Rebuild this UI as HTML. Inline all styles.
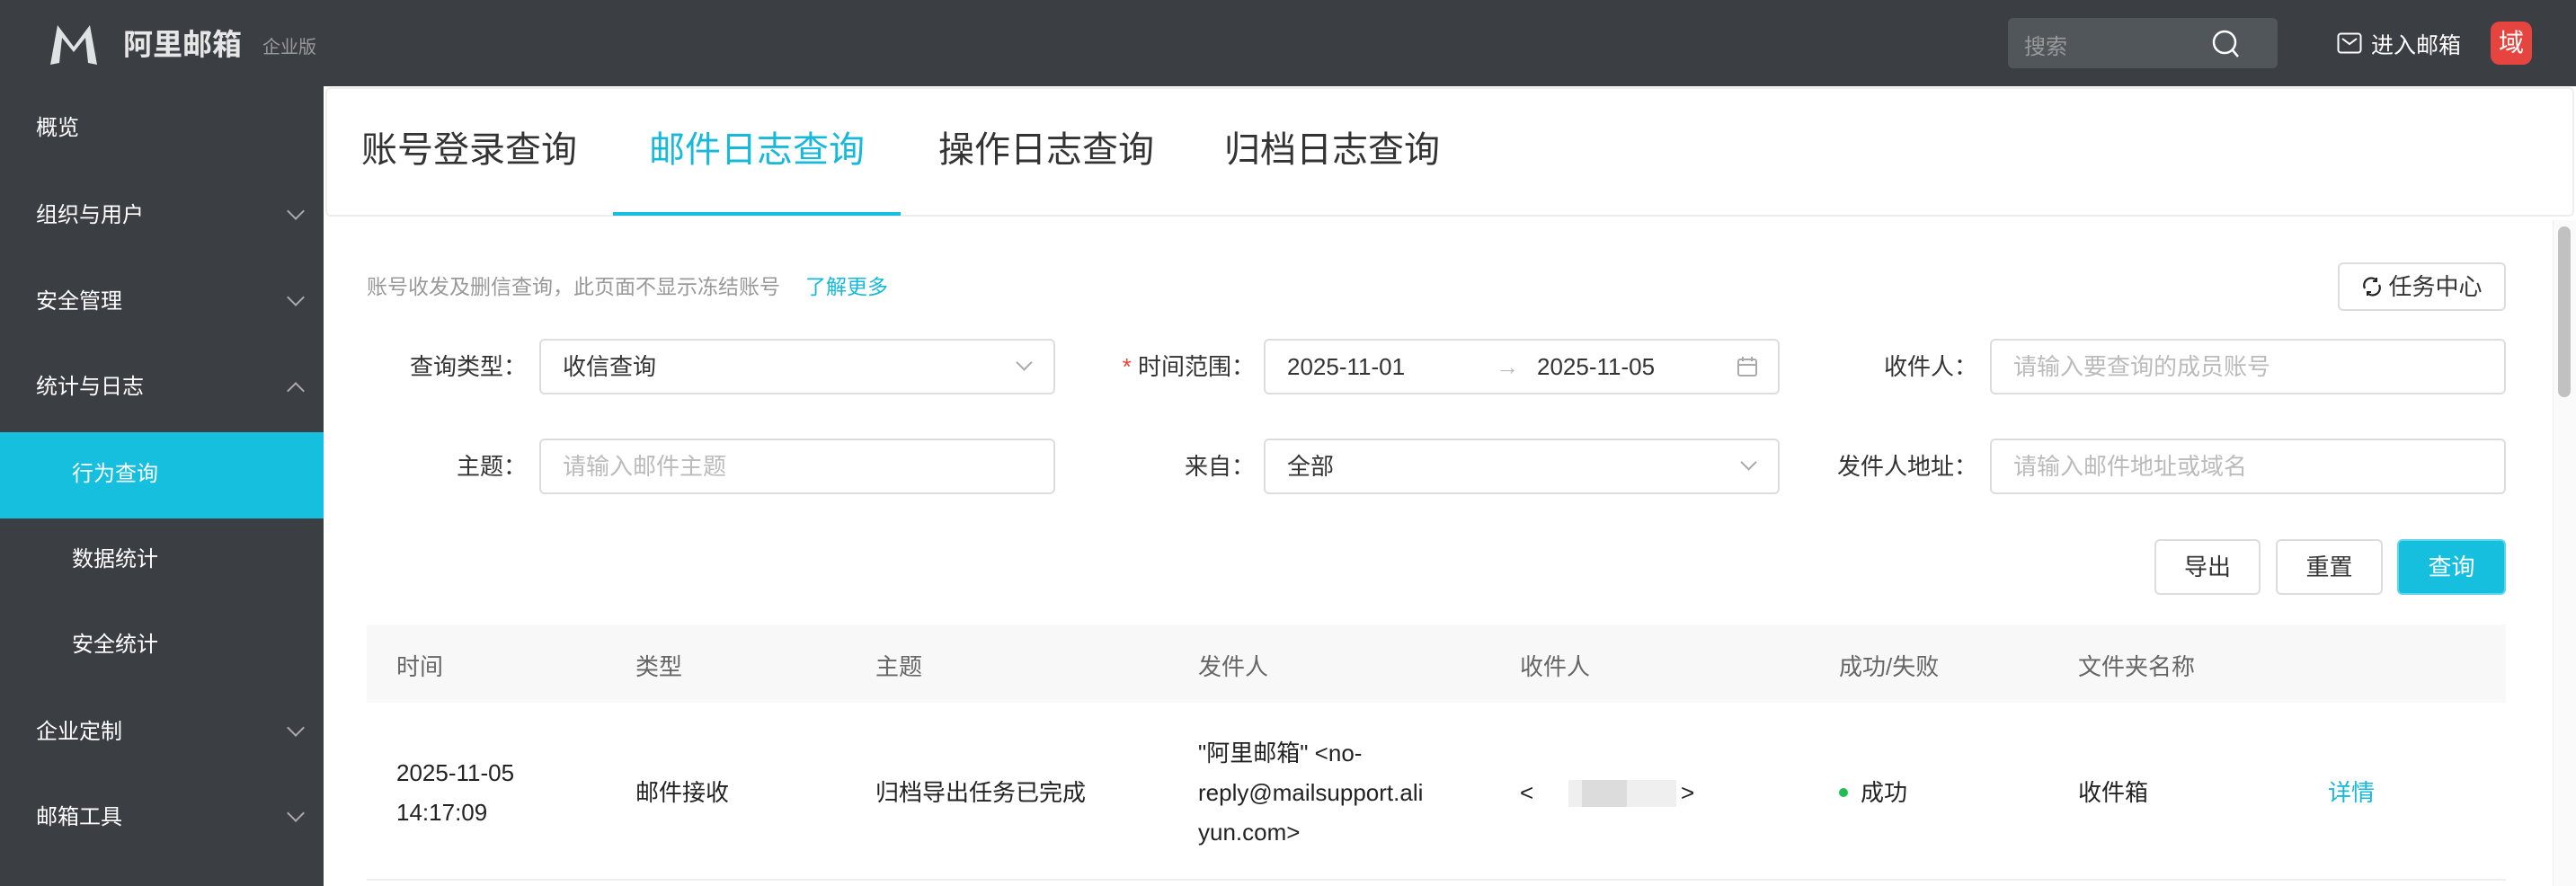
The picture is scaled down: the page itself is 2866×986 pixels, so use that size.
<!DOCTYPE html>
<html><head><meta charset="utf-8">
<style>
*{margin:0;padding:0;box-sizing:border-box}
body{width:2866px;height:986px;overflow:hidden;background:#fff;font-family:"Liberation Sans","Noto Sans CJK SC",sans-serif;position:relative;color:#333}
.abs{position:absolute}
.top{left:0;top:0;width:2866px;height:96px;background:#3b3f44}
.side{left:0;top:96px;width:360px;height:890px;background:#3b3f44}
.si{position:absolute;left:40px;color:#fff;font-size:24px;line-height:30px}
.sub{left:80px}
.chev{position:absolute;left:322px;width:14px;height:14px;border-right:2px solid #aaa;border-bottom:2px solid #aaa;transform:rotate(45deg)}
.chev.up{transform:rotate(-135deg)}
.tabs{left:362px;top:97px;width:2502px;height:144px;background:#fff;border:2px solid #eee;border-radius:6px}
.tab{position:absolute;top:42px;font-size:40px;color:#333;line-height:50px}
.lbl{position:absolute;font-size:26px;color:#333;text-align:right;line-height:62px}
.inp{position:absolute;height:62px;border:2px solid #ddd;border-radius:6px;font-size:26px;line-height:58px;padding-left:24px;color:#333;background:#fff}
.ph{color:#bbb}
.dd{position:absolute;right:26px;top:18px;width:13px;height:13px;border-right:2px solid #aaa;border-bottom:2px solid #aaa;transform:rotate(45deg)}
.btn{position:absolute;top:600px;height:62px;border:2px solid #ddd;border-radius:6px;font-size:26px;line-height:58px;text-align:center;background:#fff;color:#333}
.th{position:absolute;top:722px;font-size:26px;color:#666}
.td{position:absolute;font-size:26px;color:#222;line-height:44px}
</style></head><body>
<div class="abs top"></div>
<!-- logo -->
<svg class="abs" style="left:54px;top:26px" width="56" height="48" viewBox="0 0 56 48"><path d="M2 46 L10 2 L28 26 L46 2 L54 46 L44 44 L41 16 L28 32 L15 16 L12 44 Z" fill="#dfe2e2"/></svg>
<div class="abs" style="left:137px;top:30px;font-size:33px;color:#e6e6e6;font-weight:bold;line-height:40px">阿里邮箱</div>
<div class="abs" style="left:292px;top:40px;font-size:20px;color:#999;line-height:26px">企业版</div>
<!-- search -->
<div class="abs" style="left:2234px;top:20px;width:300px;height:56px;background:#51565b;border-radius:6px"></div>
<div class="abs" style="left:2252px;top:32px;font-size:24px;color:#999">搜索</div>
<svg class="abs" style="left:2460px;top:32px" width="34" height="34" viewBox="0 0 34 34"><circle cx="15" cy="15" r="12" stroke="#fff" stroke-width="2.5" fill="none"/><path d="M24 24 L30 31" stroke="#fff" stroke-width="2.5"/></svg>
<svg class="abs" style="left:2600px;top:36px" width="28" height="24" viewBox="0 0 28 24"><rect x="1.5" y="1.5" width="25" height="21" rx="3" stroke="#fff" stroke-width="2" fill="none"/><path d="M6 7 L14 13 L22 7" stroke="#fff" stroke-width="2" fill="none"/></svg>
<div class="abs" style="left:2638px;top:31px;font-size:25px;color:#fff">进入邮箱</div>
<div class="abs" style="left:2771px;top:24px;width:46px;height:48px;background:#e5453e;border-radius:10px;color:#fff;font-size:28px;text-align:center;line-height:48px">域</div>
<!-- sidebar -->
<div class="abs side"></div>
<div class="si" style="top:128px">概览</div>
<div class="si" style="top:225px">组织与用户</div><div class="chev" style="top:228px"></div>
<div class="si" style="top:321px">安全管理</div><div class="chev" style="top:324px"></div>
<div class="si" style="top:416px">统计与日志</div><div class="chev up" style="top:428px"></div>
<div class="abs" style="left:0;top:481px;width:360px;height:96px;background:#17bfdf"></div>
<div class="si sub" style="top:513px">行为查询</div>
<div class="si sub" style="top:608px">数据统计</div>
<div class="si sub" style="top:703px">安全统计</div>
<div class="si" style="top:800px">企业定制</div><div class="chev" style="top:803px"></div>
<div class="si" style="top:895px">邮箱工具</div><div class="chev" style="top:898px"></div>
<!-- tabs -->
<div class="abs tabs"></div>
<div class="tab" style="left:402px;top:142px">账号登录查询</div>
<div class="tab" style="left:722px;top:142px;color:#17b9da">邮件日志查询</div>
<div class="tab" style="left:1044px;top:142px">操作日志查询</div>
<div class="tab" style="left:1362px;top:142px">归档日志查询</div>
<div class="abs" style="left:682px;top:236px;width:320px;height:4px;background:#17bfdf"></div>
<!-- scrollbar -->
<div class="abs" style="left:2840px;top:245px;width:26px;height:741px;background:#fafafa;border-left:1px solid #eee"></div>
<div class="abs" style="left:2846px;top:252px;width:14px;height:190px;background:#c1c1c1;border-radius:7px"></div>
<!-- hint -->
<div class="abs" style="left:408px;top:300px;font-size:23px;color:#999">账号收发及删信查询，此页面不显示冻结账号<span style="color:#17b9da;margin-left:28px">了解更多</span></div>
<div class="btn" style="left:2601px;top:292px;width:187px;height:54px;line-height:50px;padding-left:30px">任务中心</div>
<svg class="abs" style="left:2627px;top:307px" width="24" height="24" viewBox="0 0 24 24"><path d="M4 14 A8 8 0 0 1 17 5 M20 10 A8 8 0 0 1 7 19" stroke="#222" stroke-width="2.2" fill="none"/><path d="M17 2 L17 6 L13 6" stroke="#222" stroke-width="2" fill="none"/><path d="M7 22 L7 18 L11 18" stroke="#222" stroke-width="2" fill="none"/></svg>
<!-- form -->
<div class="lbl" style="left:400px;width:186px;top:377px">查询类型：</div>
<div class="inp" style="left:600px;top:377px;width:574px">收信查询<span class="dd"></span></div>
<div class="lbl" style="left:1200px;width:196px;top:377px"><span style="color:#f04134">*</span> 时间范围：</div>
<div class="inp" style="left:1406px;top:377px;width:574px">2025-11-01<span style="position:absolute;left:256px;color:#bbb">→</span><span style="position:absolute;left:302px">2025-11-05</span>
<svg style="position:absolute;right:22px;top:17px" width="24" height="24" viewBox="0 0 24 24"><rect x="2" y="4" width="20" height="18" rx="2" stroke="#aaa" stroke-width="2" fill="none"/><path d="M2 10 H22 M7 1 V6 M17 1 V6" stroke="#aaa" stroke-width="2"/></svg></div>
<div class="lbl" style="left:2000px;width:200px;top:377px">收件人：</div>
<div class="inp ph" style="left:2214px;top:377px;width:574px">请输入要查询的成员账号</div>
<div class="lbl" style="left:400px;width:186px;top:488px">主题：</div>
<div class="inp ph" style="left:600px;top:488px;width:574px">请输入邮件主题</div>
<div class="lbl" style="left:1200px;width:196px;top:488px">来自：</div>
<div class="inp" style="left:1406px;top:488px;width:574px">全部<span class="dd"></span></div>
<div class="lbl" style="left:2000px;width:200px;top:488px">发件人地址：</div>
<div class="inp ph" style="left:2214px;top:488px;width:574px">请输入邮件地址或域名</div>
<div class="btn" style="left:2397px;width:118px">导出</div>
<div class="btn" style="left:2532px;width:119px">重置</div>
<div class="btn" style="left:2667px;width:121px;background:#17bfdf;border-color:#5fd5ec;color:#fff">查询</div>
<!-- table -->
<div class="abs" style="left:408px;top:695px;width:2380px;height:87px;background:#f8f8f8"></div>
<div class="th" style="left:441px">时间</div><div class="th" style="left:707px">类型</div><div class="th" style="left:974px">主题</div><div class="th" style="left:1333px">发件人</div><div class="th" style="left:1691px">收件人</div><div class="th" style="left:2046px">成功/失败</div><div class="th" style="left:2312px">文件夹名称</div>
<div class="td" style="left:441px;top:838px">2025-11-05<br>14:17:09</div>
<div class="td" style="left:707px;top:860px">邮件接收</div>
<div class="td" style="left:974px;top:860px">归档导出任务已完成</div>
<div class="td" style="left:1333px;top:816px">"阿里邮箱" &lt;no-<br>reply@mailsupport.ali<br>yun.com&gt;</div>
<div class="td" style="left:1691px;top:860px">&lt;</div>
<div class="abs" style="left:1745px;top:868px;width:120px;height:30px;background:#efefef"></div>
<div class="abs" style="left:1760px;top:868px;width:50px;height:30px;background:#dcdcdc"></div>
<div class="td" style="left:1870px;top:860px">&gt;</div>
<div class="abs" style="left:2046px;top:877px;width:10px;height:10px;border-radius:5px;background:#1fbf4f"></div>
<div class="td" style="left:2070px;top:860px">成功</div>
<div class="td" style="left:2312px;top:860px">收件箱</div>
<div class="td" style="left:2590px;top:860px;color:#17b9da">详情</div>
<div class="abs" style="left:408px;top:978px;width:2380px;height:2px;background:#eee"></div>
</body></html>
